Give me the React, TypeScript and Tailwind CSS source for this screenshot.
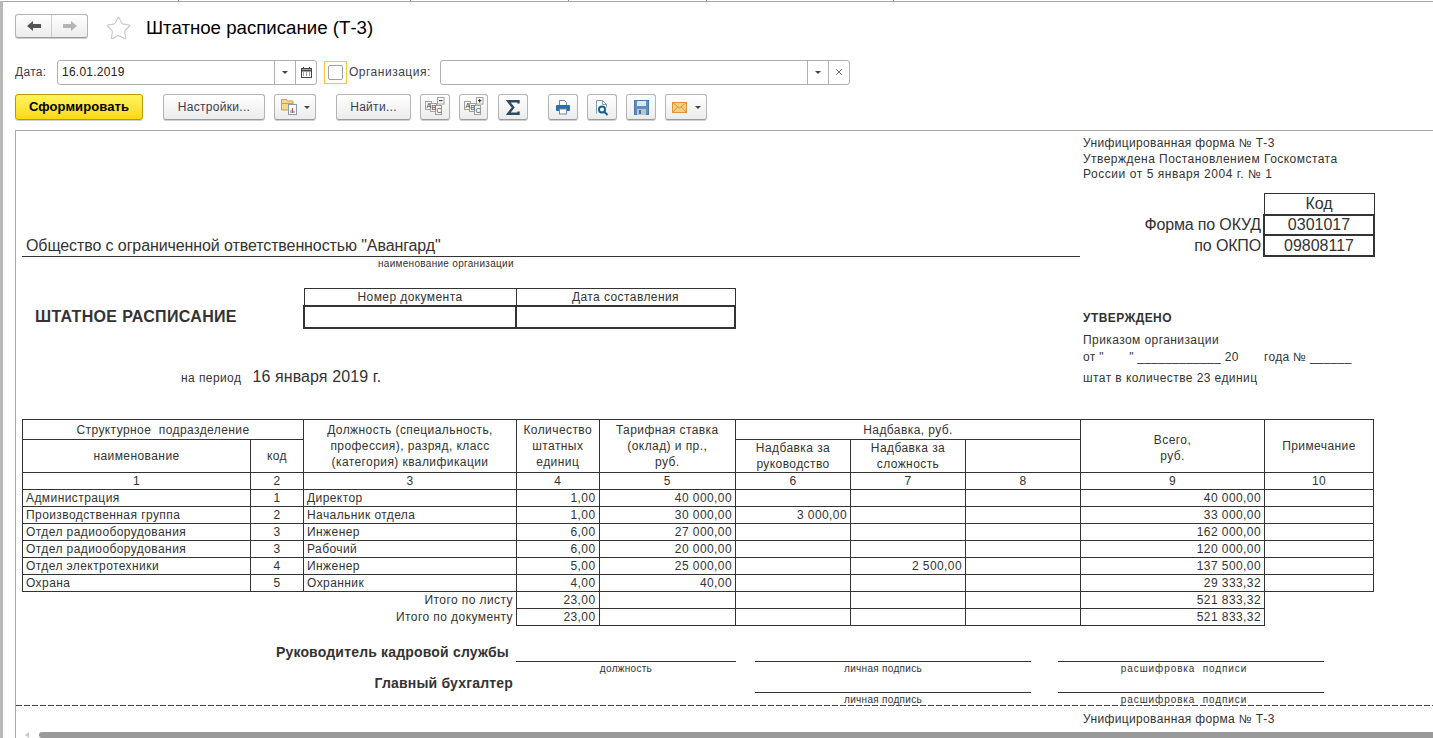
import React from 'react';
import { Star, X } from 'lucide-react';

const btn =
  'flex items-center justify-center h-[26px] rounded-[3px] border border-[#b4b4b4] border-b-[#9a9a9a] bg-linear-to-b from-white to-[#ececec] shadow-[0_1px_0_#d0d0d0] text-[12px] text-[#3c3c50]';

const cell = 'border border-[#333] px-[3px] py-0 font-normal leading-4 align-middle';
const bodyCell = 'border border-[#333] px-[3px] pt-px pb-0 font-normal leading-[15px] align-middle';

const ticks = ['left-[178px]', 'left-[410px]', 'left-[568px]', 'left-[706px]', 'left-[893px]'];

function Caret() {
  return <span className="block w-0 h-0 border-x-[3px] border-x-transparent border-t-[3px] border-t-[#444]" />;
}

function NavArrow({ flip, color }: { flip?: boolean; color: string }) {
  return (
    <svg width="14" height="10" viewBox="0 0 14 10" className={flip ? 'block rotate-180' : 'block'}>
      <path d="M0 5L6 0v3h8v4H6v3z" fill={color} />
    </svg>
  );
}

function AbcIcon({ sign }: { sign: string }) {
  return (
    <svg width="22" height="20" viewBox="0 0 22 20" className="block">
      <rect x="1.5" y="4.5" width="6" height="8" fill="#f6f6f6" stroke="#a0a0a0" />
      <rect x="6.5" y="6.5" width="6" height="8" fill="#f6f6f6" stroke="#a0a0a0" />
      <rect x="11.5" y="8.5" width="6" height="9" fill="#f6f6f6" stroke="#a0a0a0" />
      <text x="2.4" y="11" fontSize="7" fontFamily="Liberation Sans" fill="#444">A</text>
      <text x="7.4" y="13" fontSize="7" fontFamily="Liberation Sans" fill="#444">B</text>
      <text x="12.4" y="16" fontSize="7" fontFamily="Liberation Sans" fill="#444">C</text>
      <rect x="13.5" y="0.5" width="6.5" height="6.5" fill="#fff" stroke="#a0a0a0" />
      <path d={sign === '+' ? 'M15 3.7h3.5M16.7 2v3.5' : 'M15 3.7h3.5'} stroke="#222" fill="none" />
    </svg>
  );
}

function Sigma() {
  return (
    <svg width="14" height="15" viewBox="0 0 14 15" className="block">
      <path d="M12.5 3.5V1.2H2.2l5 6.3-5 6.3h10.3v-2.3" fill="none" stroke="#2e4a5e" strokeWidth="2.4" />
    </svg>
  );
}

function Printer() {
  return (
    <svg width="16" height="16" viewBox="0 0 16 16" className="block">
      <path d="M4.5 6V1.5h5l2 2V6" fill="#fff" stroke="#6c8aa2" />
      <rect x="1" y="6" width="14" height="6" rx="1" fill="#2f6ea5" />
      <rect x="4.5" y="10" width="7" height="5" fill="#fff" stroke="#6c8aa2" />
    </svg>
  );
}

function Preview() {
  return (
    <svg width="16" height="17" viewBox="0 0 16 17" className="block">
      <path d="M2.5 14.5V1.5h6l4 4v3" fill="#fff" stroke="#7f9ab0" />
      <path d="M8.5 1.5v4h4" fill="none" stroke="#7f9ab0" />
      <circle cx="8" cy="10.5" r="3" fill="#fff" stroke="#14608f" strokeWidth="2" />
      <path d="M10.5 13l3 3" stroke="#14608f" strokeWidth="2" />
    </svg>
  );
}

function Floppy() {
  return (
    <svg width="15" height="15" viewBox="0 0 15 15" className="block">
      <rect x="0.5" y="0.5" width="14" height="14" fill="#5f8fc0" stroke="#4a78a8" />
      <rect x="3" y="1" width="9" height="5" fill="#dbe8f4" />
      <rect x="3" y="9" width="9" height="6" fill="#b9c6d2" />
      <rect x="5" y="10" width="2" height="4" fill="#52708c" />
    </svg>
  );
}

function Mail() {
  return (
    <svg width="15" height="11" viewBox="0 0 15 11" className="block">
      <rect x="0.5" y="0.5" width="14" height="10" fill="#f5cf7e" stroke="#d9963a" />
      <path d="M0.5 0.5l7 5.5 7-5.5M0.5 10.5l5-5.5M14.5 10.5l-5-5.5" fill="none" stroke="#d9963a" />
    </svg>
  );
}

function FolderDoc() {
  return (
    <svg width="17" height="18" viewBox="0 0 17 18" className="block">
      <path d="M0.5 3V1.5h5l1 1.5h5.5v9H0.5z" fill="#f6d98a" stroke="#cf9f3f" />
      <path d="M0.5 5.5h11.5" stroke="#cf9f3f" />
      <rect x="7.5" y="6.5" width="8" height="10" fill="#fff" stroke="#8a9aa8" />
      <rect x="9.5" y="12" width="1" height="3" fill="#4a9a4a" />
      <rect x="11" y="10" width="1" height="5" fill="#c84a3a" />
      <rect x="12.5" y="13" width="1" height="2" fill="#4a6ac0" />
    </svg>
  );
}

const rows = [
  ['Администрация', '1', 'Директор', '1,00', '40 000,00', '', '', '', '40 000,00'],
  ['Производственная группа', '2', 'Начальник отдела', '1,00', '30 000,00', '3 000,00', '', '', '33 000,00'],
  ['Отдел радиооборудования', '3', 'Инженер', '6,00', '27 000,00', '', '', '', '162 000,00'],
  ['Отдел радиооборудования', '3', 'Рабочий', '6,00', '20 000,00', '', '', '', '120 000,00'],
  ['Отдел электротехники', '4', 'Инженер', '5,00', '25 000,00', '', '2 500,00', '', '137 500,00'],
  ['Охрана', '5', 'Охранник', '4,00', '40,00', '', '', '', '29 333,32'],
];

const totals = ['Итого по листу', 'Итого по документу'];

function StaffTable() {
  return (
    <table className="ml-[6px] w-[1351px] table-fixed border-collapse text-[12px] text-[#333] tracking-[0.42px]">
      <colgroup>
        <col className="w-[228px]" />
        <col className="w-[53px]" />
        <col className="w-[213px]" />
        <col className="w-[82.5px]" />
        <col className="w-[136.5px]" />
        <col className="w-[115px]" />
        <col className="w-[115px]" />
        <col className="w-[115px]" />
        <col className="w-[184px]" />
        <col className="w-[109px]" />
      </colgroup>
      <thead>
        <tr className="h-[20px]">
          <th colSpan={2} className={`${cell} text-center whitespace-pre`}>Структурное  подразделение</th>
          <th rowSpan={2} className={`${cell} text-center`}>Должность (специальность,<br />профессия), разряд, класс<br />(категория) квалификации</th>
          <th rowSpan={2} className={`${cell} text-center`}>Количество<br />штатных<br />единиц</th>
          <th rowSpan={2} className={`${cell} text-center`}>Тарифная ставка<br />(оклад) и пр.,<br />руб.</th>
          <th colSpan={3} className={`${cell} text-center`}>Надбавка, руб.</th>
          <th rowSpan={2} className={`${cell} text-center pt-[3px]`}>Всего,<br />руб.</th>
          <th rowSpan={2} className={`${cell} text-center`}>Примечание</th>
        </tr>
        <tr className="h-[33px]">
          <th className={`${cell} text-center`}>наименование</th>
          <th className={`${cell} text-center`}>код</th>
          <th className={`${cell} text-center`}>Надбавка за<br />руководство</th>
          <th className={`${cell} text-center`}>Надбавка за<br />сложность</th>
          <th className={cell}></th>
        </tr>
        <tr className="h-[17px]">
          {['1', '2', '3', '4', '5', '6', '7', '8', '9', '10'].map((n) => (
            <th key={n} className={`${cell} text-center`}>{n}</th>
          ))}
        </tr>
      </thead>
      <tbody>
        {rows.map((r, i) => (
          <tr key={i} className="h-[17px]">
            <td className={bodyCell}>{r[0]}</td>
            <td className={`${bodyCell} text-center`}>{r[1]}</td>
            <td className={bodyCell}>{r[2]}</td>
            {r.slice(3).map((v, j) => (
              <td key={j} className={`${bodyCell} text-right`}>{v}</td>
            ))}
            <td className={bodyCell}></td>
          </tr>
        ))}
        {totals.map((t) => (
          <tr key={t} className="h-[17px]">
            <td colSpan={3} className="px-[3px] pt-px pb-0 text-right leading-[15px]">{t}</td>
            <td className={`${bodyCell} text-right`}>23,00</td>
            <td className={bodyCell}></td>
            <td className={bodyCell}></td>
            <td className={bodyCell}></td>
            <td className={bodyCell}></td>
            <td className={`${bodyCell} text-right`}>521 833,32</td>
          </tr>
        ))}
      </tbody>
    </table>
  );
}

export default function App() {
  return (
    <div className="relative w-[1433px] h-[738px] overflow-hidden bg-white font-['Liberation_Sans',Arial,sans-serif] text-[#333]">
      {ticks.map((t) => (
        <span key={t} className={`absolute top-0 w-px h-px bg-[#888] ${t}`} />
      ))}
      <div className="flex h-full pt-px">
        <div className="w-[3px] bg-[#b8b8b8]" />
        <div className="flex flex-col flex-1 min-w-0 border-t border-t-[#a8a8a8]">
          {/* шапка */}
          <div className="flex items-start h-[39px] mt-[12px] pl-[12px]">
            <div className="flex h-[24px] w-[73px] rounded-[3px] border border-[#b4b4b4] border-b-[#9a9a9a] bg-linear-to-b from-white to-[#ececec] shadow-[0_1px_0_#d0d0d0]">
              <div className="flex w-[36px] items-center justify-center border-r border-r-[#cfcfcf]">
                <NavArrow color="#555" />
              </div>
              <div className="flex flex-1 items-center justify-center">
                <NavArrow flip color="#b4b4b4" />
              </div>
            </div>
            <Star size={27} strokeWidth={1} className="ml-[17px] mt-[1px] text-[#c8c8c8]" />
            <h1 className="ml-[14px] mt-[3px] text-[18.67px] leading-[21px] font-normal text-black">Штатное расписание (Т-3)</h1>
          </div>

          {/* отбор */}
          <div className="flex items-center h-[24px] mt-[7px] pl-[12px] text-[12px] text-[#3c3c50]">
            <span className="w-[42px] tracking-[0.3px]">Дата:</span>
            <div className="flex items-center w-[260px] h-[25px] rounded-[3px] border border-[#b0b0b0] bg-white">
              <span className="flex-1 pl-[4px] text-[#222] tracking-[0.25px]">16.01.2019</span>
              <span className="flex items-center justify-center w-[21px] h-full border-l border-l-[#b0b0b0]"><Caret /></span>
              <span className="flex items-center justify-center w-[21px] h-full border-l border-l-[#b0b0b0]">
                <svg width="11" height="11" viewBox="0 0 11 11" className="block">
                  <rect x="0.5" y="1.5" width="10" height="9" fill="none" stroke="#444" />
                  <path d="M0.5 3.5h10" stroke="#444" strokeWidth="2" />
                  <path d="M2.5 0v2M8.5 0v2M2 6h1M5 6h1M8 6h1M2 8h1M5 8h1M8 8h1" stroke="#444" />
                </svg>
              </span>
            </div>
            <div className="flex items-center justify-center w-[23px] h-[23px] ml-[7px] border border-[#f5c92f]">
              <span className="block w-[15px] h-[15px] rounded-[2px] border border-[#a0a0a0]" />
            </div>
            <span className="ml-[2px] w-[91px] tracking-[0.5px]">Организация:</span>
            <div className="flex items-center w-[410px] h-[25px] rounded-[3px] border border-[#b0b0b0] bg-white">
              <span className="flex-1" />
              <span className="flex items-center justify-center w-[21px] h-full border-l border-l-[#b0b0b0]"><Caret /></span>
              <span className="flex items-center justify-center w-[21px] h-full border-l border-l-[#b0b0b0]">
                <X size={10} strokeWidth={2} className="text-[#555]" />
              </span>
            </div>
          </div>

          {/* кнопки */}
          <div className="flex items-center h-[26px] mt-[10px] pl-[12px]">
            <button className="flex items-center justify-center w-[128px] h-[26px] rounded-[3px] border border-[#b89a00] bg-linear-to-b from-[#fff35c] to-[#fbd900] shadow-[0_1px_0_#d0d0d0] text-[13px] font-bold text-black tracking-[0.1px]">Сформировать</button>
            <button className={`${btn} w-[102px] ml-[20px] tracking-[0.3px]`}>Настройки...</button>
            <button className={`${btn} w-[42px] ml-[9px] gap-[6px]`}><FolderDoc /><Caret /></button>
            <button className={`${btn} w-[75px] ml-[20px] tracking-[0.3px]`}>Найти...</button>
            <button className={`${btn} w-[30px] ml-[9px]`}><AbcIcon sign="-" /></button>
            <button className={`${btn} w-[29px] ml-[9px]`}><AbcIcon sign="+" /></button>
            <button className={`${btn} w-[30px] ml-[10px]`}><Sigma /></button>
            <button className={`${btn} w-[30px] ml-[20px]`}><Printer /></button>
            <button className={`${btn} w-[30px] ml-[9px]`}><Preview /></button>
            <button className={`${btn} w-[30px] ml-[9px]`}><Floppy /></button>
            <button className={`${btn} w-[42px] ml-[9px] gap-[8px]`}><Mail /><Caret /></button>
          </div>

          {/* печатная форма */}
          <div className="relative flex-1 min-h-0 ml-[12px] mt-[10px] overflow-hidden border-l border-t border-[#a8a8a8]">
            <div className="flex h-[126px]">
              <div className="flex items-end w-[1064px] pl-[6px]">
                <div className="w-full pl-[4px] border-b border-b-[#333] text-[16px] leading-[20px] tracking-[-0.1px]">
                  Общество с ограниченной ответственностью "Авангард"
                </div>
              </div>
              <div className="flex flex-col w-[294px]">
                <div className="pt-[5px] pl-[3px] text-[12px] leading-[15.5px] tracking-[0.35px]">
                  Унифицированная форма № Т-3<br />
                  <span className="tracking-[0.46px]">Утверждена Постановлением Госкомстата</span><br />
                  <span className="tracking-[0.55px]">России от 5 января 2004 г. № 1</span>
                </div>
                <table className="mt-auto w-[294px] table-fixed border-collapse text-[16px]">
                  <colgroup>
                    <col className="w-[184px]" />
                    <col className="w-[110px]" />
                  </colgroup>
                  <tbody>
                    <tr className="h-[22px]">
                      <td></td>
                      <td className="border border-[#333] p-0 text-center leading-[20px]">Код</td>
                    </tr>
                    <tr className="h-[20px]">
                      <td className="p-0 pr-[2px] text-right leading-[20px] tracking-[-0.15px]">Форма по ОКУД</td>
                      <td className="border-2 border-[#333] p-0 text-center leading-[18px]">0301017</td>
                    </tr>
                    <tr className="h-[21px]">
                      <td className="p-0 pr-[2px] text-right leading-[20px] tracking-[-0.15px]">по ОКПО</td>
                      <td className="border-2 border-[#333] p-0 text-center leading-[18px]">09808117</td>
                    </tr>
                  </tbody>
                </table>
              </div>
            </div>

            <div className="h-[31px] pl-[362px] pt-[1px] text-[10px] leading-[12px] tracking-[0.3px]">наименование организации</div>

            <div className="flex h-[131px]">
              <div className="w-[1067px]">
                <div className="flex">
                  <div className="w-[287px] pl-[19px] pt-[19px] text-[16px] leading-[20px] font-bold tracking-[0.33px]">ШТАТНОЕ РАСПИСАНИЕ</div>
                  <table className="w-[431px] table-fixed border-collapse text-[12px] tracking-[0.42px]">
                    <colgroup>
                      <col className="w-[212px]" />
                      <col className="w-[219px]" />
                    </colgroup>
                    <tbody>
                      <tr className="h-[17px]">
                        <td className="border border-[#333] p-0 text-center leading-4">Номер документа</td>
                        <td className="border border-[#333] p-0 text-center leading-4">Дата составления</td>
                      </tr>
                      <tr className="h-[22px]">
                        <td className="border-2 border-[#333] p-0"></td>
                        <td className="border-2 border-[#333] p-0"></td>
                      </tr>
                    </tbody>
                  </table>
                </div>
                <div className="flex items-center gap-[11px] mt-[38px] pl-[165px]">
                  <span className="text-[12px] tracking-[0.42px] pt-[2px]">на период</span>
                  <span className="text-[16px] leading-[20px] tracking-[0.1px]">16 января 2019 г.</span>
                </div>
              </div>
              <div className="pt-[22px] text-[12px] leading-4 tracking-[0.42px]">
                <div className="font-bold">УТВЕРЖДЕНО</div>
                <div className="mt-[6px]">Приказом организации</div>
                <div className="mt-[1px] whitespace-pre tracking-[0.3px]">от "       " ____________ 20       года № ______</div>
                <div className="mt-[5px]">штат в количестве 23 единиц</div>
              </div>
            </div>

            <StaffTable />

            <div className="grid grid-cols-[500px_220px_19px_276px_27px_266px] mt-[18px] text-[10px] leading-[12px] tracking-[0.3px]">
              <div className="h-[18px] pr-[7px] text-right text-[14px] font-bold leading-[16px] tracking-[0.18px]">Руководитель кадровой службы</div>
              <div className="border-b border-b-[#333]" />
              <div />
              <div className="border-b border-b-[#333]" />
              <div />
              <div className="border-b border-b-[#333]" />

              <div className="h-[13px]" />
              <div className="pt-px text-center">должность</div>
              <div />
              <div className="pt-px pr-[20px] text-center">личная подпись</div>
              <div />
              <div className="pt-px pr-[14px] text-center whitespace-pre tracking-[0.9px]">расшифровка  подписи</div>

              <div className="h-[18px] pr-[3px] text-right text-[14px] font-bold leading-[16px] tracking-[0.18px]">Главный бухгалтер</div>
              <div />
              <div />
              <div className="border-b border-b-[#333]" />
              <div />
              <div className="border-b border-b-[#333]" />

              <div className="h-[12px]" />
              <div />
              <div />
              <div className="pt-[2px] pr-[20px] text-center leading-[10px]">личная подпись</div>
              <div />
              <div className="pt-[2px] pr-[14px] text-center whitespace-pre leading-[10px] tracking-[0.9px]">расшифровка  подписи</div>
            </div>

            <div className="h-px bg-[repeating-linear-gradient(90deg,#444_0,#444_6px,transparent_6px,transparent_8px)]" />

            <div className="mt-[5px] pl-[1067px] text-[12px] leading-4 tracking-[0.35px]">Унифицированная форма № Т-3</div>

            <div className="absolute left-[23px] right-0 bottom-0 h-[6px] rounded-l-[4px] bg-[#9a9a9a]" />
            <div className="absolute left-[9px] bottom-0 h-0 w-0 border-y-[3px] border-y-transparent border-r-[4px] border-r-[#c8c8c8]" />
          </div>
        </div>
      </div>
    </div>
  );
}
